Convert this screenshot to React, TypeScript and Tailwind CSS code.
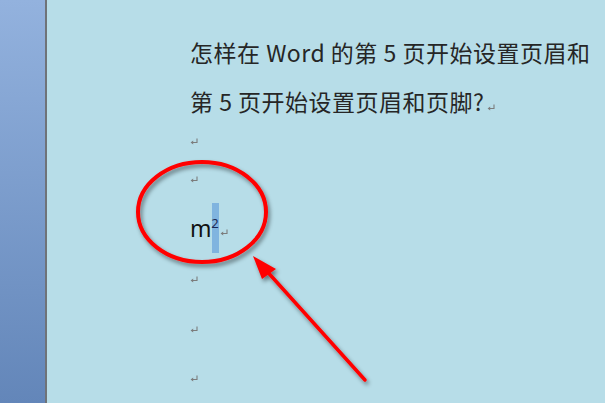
import React from 'react';

function ReturnMark({ className = '' }: { className?: string }) {
  return (
    <svg width="8" height="7" viewBox="0 0 8 7" className={className}>
      <path d="M7 0.5V4.5H2" fill="none" stroke="#7c7c7c" strokeWidth="1.1" />
      <path d="M0.6 4.5L3.2 2.6V6.4Z" fill="#7c7c7c" />
    </svg>
  );
}

function EmptyLine({ h }: { h: string }) {
  return (
    <div className={`flex items-center ${h}`}>
      <ReturnMark />
    </div>
  );
}

export default function App() {
  return (
    <div className="relative flex h-[403px] w-[605px] overflow-hidden bg-[#b7dde8]">
      <div className="h-full w-[45px] shrink-0 bg-gradient-to-b from-[#93b2de] to-[#6386b9]" />
      <div className="h-full w-[2px] shrink-0 bg-[#6f7378]" />

      <div
        className="flex min-w-0 flex-1 flex-col pl-[143px] pt-[28px] text-[#262626]"
        style={{ fontFamily: '"Noto Sans CJK SC", "Noto Sans", sans-serif' }}
      >
        <div className="flex h-[48px] items-center whitespace-nowrap text-[23px] leading-none tracking-[0.5px]">
          怎样在 Word 的第 5 页开始设置页眉和
        </div>
        <div className="flex h-[50px] items-center whitespace-nowrap text-[23px] leading-none tracking-[0.5px]">
          第 5 页开始设置页眉和页脚?
          <ReturnMark className="ml-[3px] mt-[12px]" />
        </div>
        <EmptyLine h="h-[30px]" />
        <EmptyLine h="h-[46px]" />
        <div className="flex h-[52px] items-center">
          <span className="text-[23px] leading-none text-[#111]" style={{ fontFamily: '"Noto Sans", sans-serif' }}>
            m
          </span>
          <span className="relative flex h-[50px] w-[7px] items-start justify-center bg-[#80b4df]">
            <span className="mt-[14px] text-[13px] leading-none text-[#1b2a55]" style={{ fontFamily: '"Noto Sans", sans-serif' }}>
              2
            </span>
          </span>
          <ReturnMark className="ml-[1px] mt-[8px]" />
        </div>
        <EmptyLine h="h-[50px]" />
        <EmptyLine h="h-[50px]" />
        <EmptyLine h="h-[48px]" />
      </div>

      <svg className="pointer-events-none absolute left-0 top-0" width="605" height="403" viewBox="0 0 605 403">
        <defs>
          <filter id="shadow" x="-20%" y="-20%" width="140%" height="140%">
            <feDropShadow dx="2" dy="3" stdDeviation="2" floodColor="#000" floodOpacity="0.45" />
          </filter>
        </defs>
        <g filter="url(#shadow)">
          <ellipse cx="202" cy="212" rx="64" ry="50" fill="none" stroke="#ff0000" strokeWidth="4" />
          <line x1="365" y1="380" x2="264" y2="268" stroke="#ff0000" strokeWidth="3.5" strokeLinecap="round" />
          <path d="M253 256L276 269L262 279Z" fill="#ff0000" />
        </g>
      </svg>
    </div>
  );
}
